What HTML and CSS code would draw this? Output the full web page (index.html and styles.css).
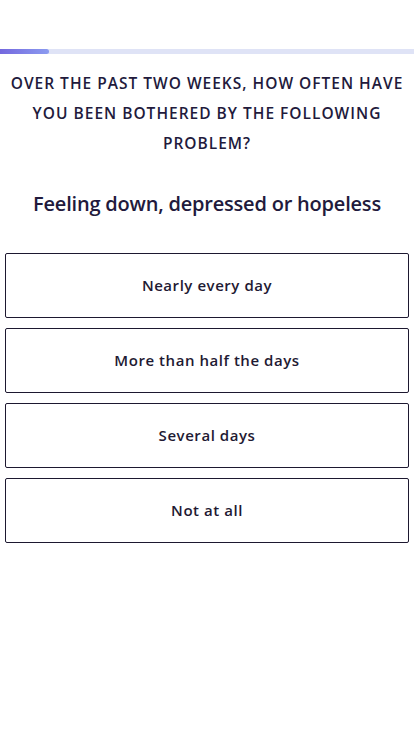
FILE: index.html
```html
<!DOCTYPE html>
<html lang="en">
<head>
<meta charset="utf-8">
<title>Assessment</title>
<link rel="stylesheet" href="styles.css">
</head>
<body>
<div class="progress"><div class="progress-fill"></div></div>
<main class="content">
  <p class="prompt">OVER THE PAST TWO WEEKS, HOW OFTEN HAVE YOU BEEN BOTHERED BY THE FOLLOWING PROBLEM?</p>
  <h1 class="question">Feeling down, depressed or hopeless</h1>
  <div class="options">
    <button class="option">Nearly every day</button>
    <button class="option">More than half the days</button>
    <button class="option">Several days</button>
    <button class="option">Not at all</button>
  </div>
</main>
</body>
</html>
```
FILE: styles.css
```css
html, body {
  margin: 0;
  padding: 0;
  background: #ffffff;
}
body {
  font-family: "Open Sans", "Liberation Sans", sans-serif;
  color: #221a3c;
}
.progress {
  margin-top: 49px;
  height: 5px;
  background: #dfe3f6;
}
.progress-fill {
  width: 49px;
  height: 100%;
  border-radius: 0 3px 3px 0;
  background: linear-gradient(90deg, #7468de, #8b9bf0);
}
.content {
  padding: 0 5px;
}
.prompt {
  margin: 14px 0 0;
  text-align: center;
  font-size: 15.5px;
  font-weight: 600;
  letter-spacing: 1px;
  line-height: 30px;
  padding: 0;
}
.question {
  margin: 33px 0 0;
  text-align: center;
  font-size: 20px;
  font-weight: 600;
  line-height: 26px;
  letter-spacing: -0.2px;
}
.options {
  margin-top: 36px;
  display: flex;
  flex-direction: column;
  gap: 10px;
}
.option {
  height: 65px;
  border: 1px solid #1d1830;
  border-radius: 2px;
  background: #ffffff;
  font-family: inherit;
  font-size: 15px;
  font-weight: 600;
  letter-spacing: 0.55px;
  color: #1f1a33;
  text-align: center;
  padding: 0 0 1px;
}
```
